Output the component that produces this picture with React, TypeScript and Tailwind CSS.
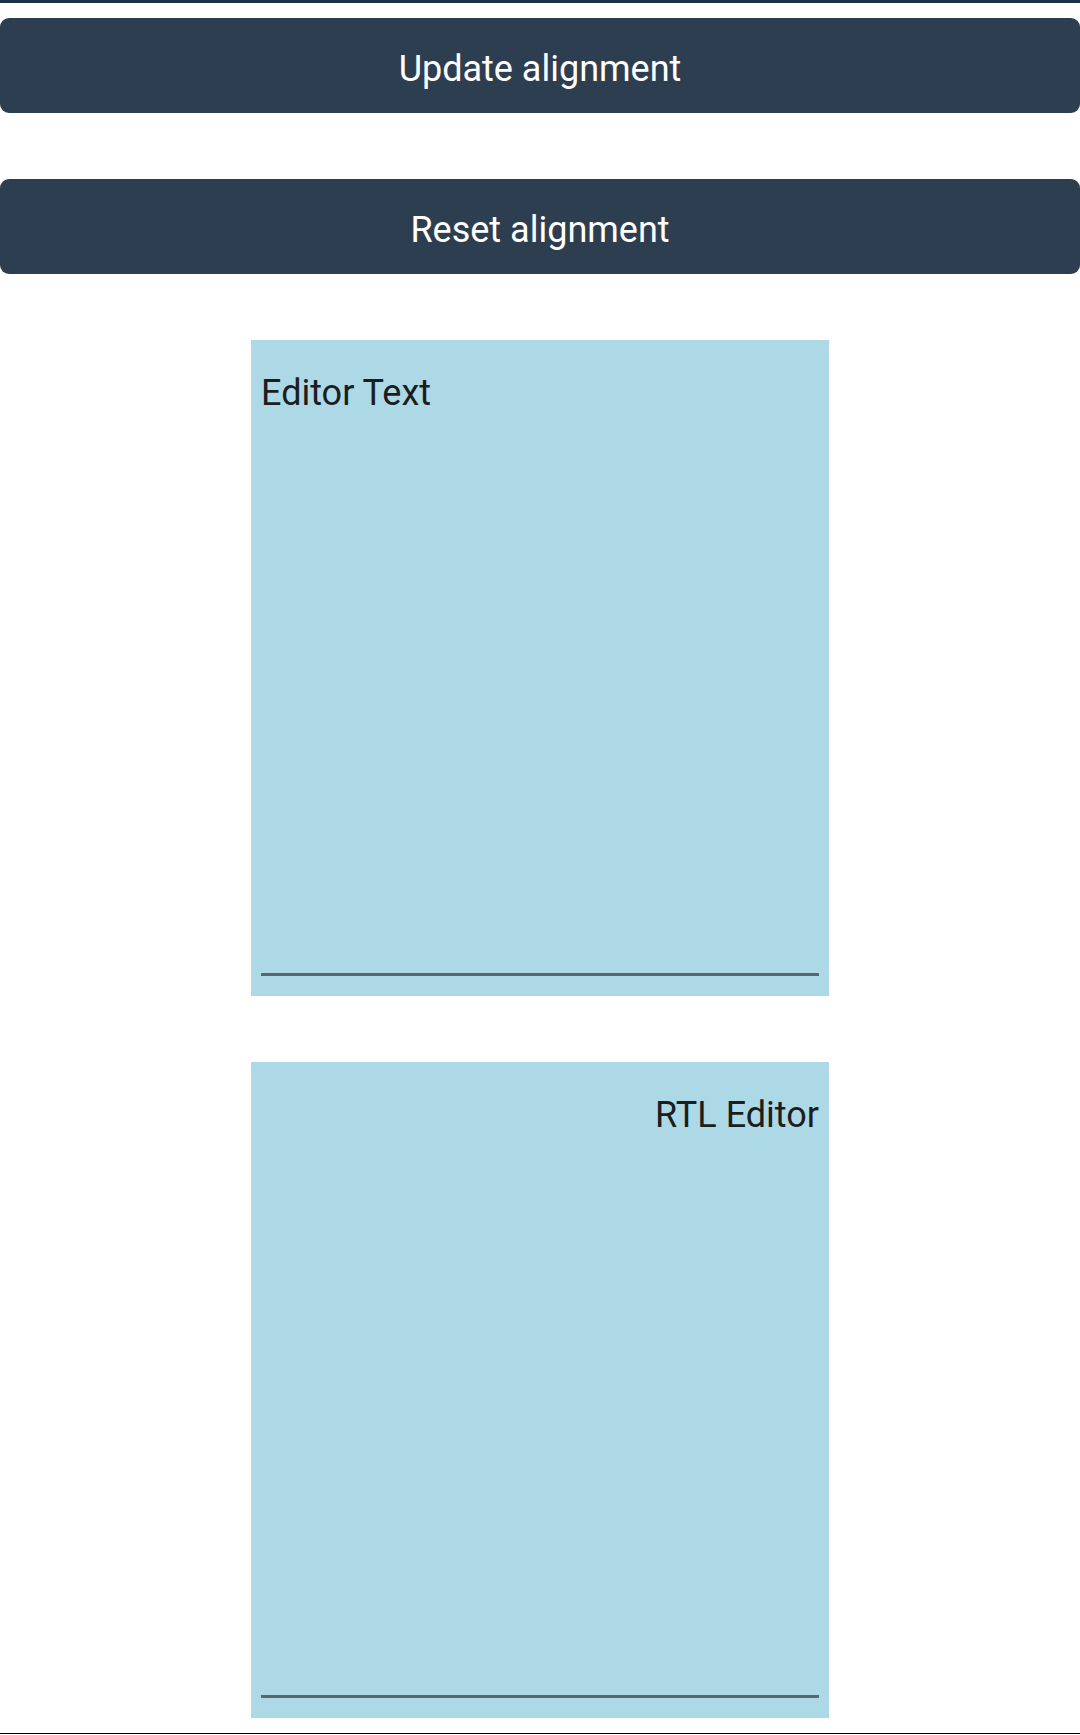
import React from "react";

function Editor({ text, rtl }: { text: string; rtl?: boolean }) {
  return (
    <div className="mx-auto flex h-[656px] w-[578px] flex-col bg-[#add8e6] px-[10px] pb-[20px] pt-[27px]">
      <p
        dir={rtl ? "rtl" : "ltr"}
        className="flex-1 text-[36px] leading-[52px] text-[#1b1d1e] font-['Roboto',sans-serif]"
      >
        {text}
      </p>
      <div className="h-[3px] w-full bg-[#56676f]" />
    </div>
  );
}

export default function App() {
  return (
    <div className="flex min-h-[1735px] flex-col bg-white font-['Roboto',sans-serif]">
      <div className="h-[3px] bg-[#1c3049]" />
      <button className="mt-[15px] h-[95px] w-full rounded-[9px] bg-[#2d3e50] pt-[6px] text-[36px] text-white">
        Update alignment
      </button>
      <button className="mt-[66px] h-[95px] w-full rounded-[9px] bg-[#2d3e50] pt-[6px] text-[36px] text-white">
        Reset alignment
      </button>
      <div className="mt-[66px]">
        <Editor text="Editor Text" />
      </div>
      <div className="mt-[66px]">
        <Editor text="RTL Editor" rtl />
      </div>
      <div className="mt-[15px] h-px bg-black" />
    </div>
  );
}
